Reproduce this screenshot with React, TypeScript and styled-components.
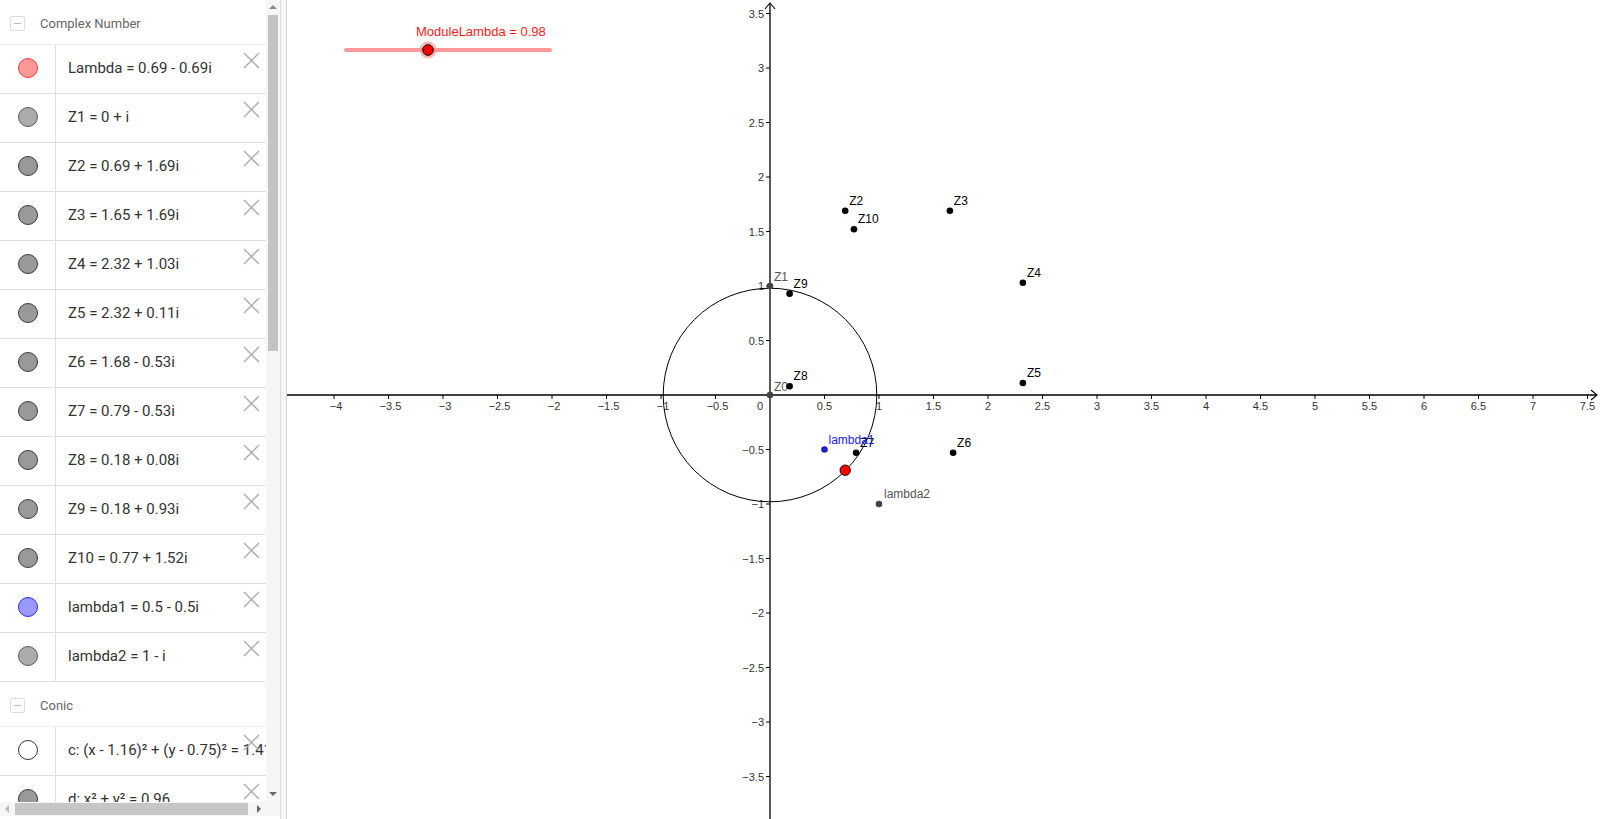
import React from "react";
import styled, { createGlobalStyle } from "styled-components";

const GlobalStyle = createGlobalStyle`
  html, body { margin: 0; padding: 0; background: #fff; overflow: hidden; }
  #root { width: 1600px; height: 819px; }
`;

const GRAPH_LEFT = 287;
const GRAPH_W = 1600 - GRAPH_LEFT;
const GRAPH_H = 819;
const OX = 770 - GRAPH_LEFT;
const OY = 395;
const U = 109;
const sx = (x: number) => OX + x * U;
const sy = (y: number) => OY - y * U;

const Page = styled.div`
  display: flex;
  width: 1600px;
  height: 819px;
  overflow: hidden;
  font-family: Roboto, "Noto Sans", sans-serif;
`;

const AlgebraPanel = styled.div`
  flex: none;
  display: grid;
  grid-template-columns: 266px 14px;
  grid-template-rows: 802px 14px 3px;
  width: 280px;
  border-right: 1px solid #dcdcdc;
  background: #fff;
`;

const Divider = styled.div`
  flex: none;
  width: 5px;
  background: #f4f4f4;
  border-right: 1px solid #d6d6d6;
`;

const ListViewport = styled.div`
  overflow: hidden;
  background: #fff;
`;

const GroupHeader = styled.div`
  height: 41px;
  padding-top: 3px;
  display: flex;
  align-items: center;
  gap: 15px;
  padding-left: 10px;
  border-bottom: 1px solid #ededed;
  color: #666;
  font-size: 13px;
  font-family: Roboto, "Noto Sans", sans-serif;
`;

const CollapseBox = styled.div`
  width: 13px;
  height: 13px;
  border: 1px solid #dddddd;
  border-radius: 2px;
  display: flex;
  align-items: center;
  justify-content: center;
  &::after {
    content: "";
    width: 7px;
    height: 1px;
    background: #b8b8b8;
  }
`;

const ItemRow = styled.div`
  position: relative;
  display: flex;
  height: 48px;
  width: 266px;
  border-bottom: 1px solid #dedede;
`;

const MarbleCell = styled.div`
  flex: none;
  width: 56px;
  display: flex;
  align-items: center;
  justify-content: center;
  border-right: 1px solid #dedede;
  padding-bottom: 2px;
  box-sizing: border-box;
`;

type MarbleKind = "red" | "light" | "gray" | "blue" | "white";
const marbleFill: Record<MarbleKind, string> = {
  red: "#ff9999",
  light: "#acacac",
  gray: "#999999",
  blue: "#9999ff",
  white: "#ffffff",
};
const marbleStroke: Record<MarbleKind, string> = {
  red: "#f03c3c",
  light: "#5a5a5a",
  gray: "#3a3a3a",
  blue: "#2a2aee",
  white: "#333333",
};

const Marble = styled.div<{ $kind: MarbleKind }>`
  width: 18px;
  height: 18px;
  border-radius: 50%;
  background: ${(p) => marbleFill[p.$kind]};
  border: 1px solid ${(p) => marbleStroke[p.$kind]};
`;

const Formula = styled.div`
  display: flex;
  align-items: center;
  padding-left: 12px;
  padding-bottom: 2px;
  white-space: nowrap;
  font-size: 15px;
  color: #333;
  font-family: Roboto, "Noto Sans", sans-serif;
`;

const CloseButton = styled.div`
  position: absolute;
  top: 7px;
  right: 6px;
  width: 17px;
  height: 17px;
  display: flex;
`;

const VScroll = styled.div`
  display: flex;
  flex-direction: column;
  align-items: center;
  background: #f6f6f6;
  padding: 5px 2px 6px;
  box-sizing: border-box;
`;

const HScroll = styled.div`
  display: flex;
  align-items: center;
  background: #f6f6f6;
  padding: 0 5px;
  box-sizing: border-box;
`;

const Corner = styled.div`
  background: #f6f6f6;
`;

const Arrow = styled.div<{ $dir: "up" | "down" | "left" | "right" }>`
  flex: none;
  width: 0;
  height: 0;
  ${(p) =>
    p.$dir === "up"
      ? "border-left: 4px solid transparent; border-right: 4px solid transparent; border-bottom: 4px solid #8a8a8a;"
      : p.$dir === "down"
      ? "border-left: 4px solid transparent; border-right: 4px solid transparent; border-top: 4px solid #666;"
      : p.$dir === "left"
      ? "border-top: 4px solid transparent; border-bottom: 4px solid transparent; border-right: 4px solid #bbb;"
      : "border-top: 4px solid transparent; border-bottom: 4px solid transparent; border-left: 4px solid #666;"}
`;

const VThumb = styled.div`
  flex: none;
  width: 10px;
  height: 336px;
  margin-top: 6px;
  background: #c3c3c3;
`;

const HThumb = styled.div`
  flex: none;
  height: 12px;
  width: 233px;
  margin-left: 6px;
  background: #c6c6c6;
  background-image: linear-gradient(to right, #b4b4b4 1px, transparent 1px);
  background-size: 4px 1px;
  background-repeat: repeat-x;
  background-position: 0 6px;
`;

const Spacer = styled.div`
  flex: 1;
`;

const GraphView = styled.div`
  flex: 1;
  height: 819px;
  background: #fff;
`;

const Canvas = styled.svg`
  display: block;
  font-family: "Liberation Sans", Arial, sans-serif;
`;

type Item = { kind: MarbleKind; text: string };

const complexItems: Item[] = [
  { kind: "red", text: "Lambda = 0.69 - 0.69i" },
  { kind: "light", text: "Z1 = 0 + i" },
  { kind: "gray", text: "Z2 = 0.69 + 1.69i" },
  { kind: "gray", text: "Z3 = 1.65 + 1.69i" },
  { kind: "gray", text: "Z4 = 2.32 + 1.03i" },
  { kind: "gray", text: "Z5 = 2.32 + 0.11i" },
  { kind: "gray", text: "Z6 = 1.68 - 0.53i" },
  { kind: "gray", text: "Z7 = 0.79 - 0.53i" },
  { kind: "gray", text: "Z8 = 0.18 + 0.08i" },
  { kind: "gray", text: "Z9 = 0.18 + 0.93i" },
  { kind: "gray", text: "Z10 = 0.77 + 1.52i" },
  { kind: "blue", text: "lambda1 = 0.5 - 0.5i" },
  { kind: "light", text: "lambda2 = 1 - i" },
];

const conicItems: Item[] = [
  { kind: "white", text: "c: (x - 1.16)² + (y - 0.75)² = 1.41" },
  { kind: "gray", text: "d: x² + y² = 0.96" },
];

const CloseIcon = () => (
  <svg width="17" height="17" viewBox="0 0 17 17">
    <path d="M1 1 L16 16 M16 1 L1 16" stroke="#ababab" strokeWidth="1.4" fill="none" />
  </svg>
);

const Row = ({ item }: { item: Item }) => (
  <ItemRow>
    <MarbleCell>
      <Marble $kind={item.kind} />
    </MarbleCell>
    <Formula>{item.text}</Formula>
    <CloseButton>
      <CloseIcon />
    </CloseButton>
  </ItemRow>
);

type Pt = { x: number; y: number; label: string; color: string; labelColor: string; dx?: number; dy?: number };

const points: Pt[] = [
  { x: 0, y: 0, label: "Z0", color: "#444", labelColor: "#555", dx: 4, dy: -4 },
  { x: 0, y: 1, label: "Z1", color: "#444", labelColor: "#555", dx: 4, dy: -5 },
  { x: 0.69, y: 1.69, label: "Z2", color: "#000", labelColor: "#000" },
  { x: 1.65, y: 1.69, label: "Z3", color: "#000", labelColor: "#000" },
  { x: 2.32, y: 1.03, label: "Z4", color: "#000", labelColor: "#000" },
  { x: 2.32, y: 0.11, label: "Z5", color: "#000", labelColor: "#000" },
  { x: 1.68, y: -0.53, label: "Z6", color: "#000", labelColor: "#000" },
  { x: 0.79, y: -0.53, label: "Z7", color: "#000", labelColor: "#000" },
  { x: 0.18, y: 0.08, label: "Z8", color: "#000", labelColor: "#000" },
  { x: 0.18, y: 0.93, label: "Z9", color: "#000", labelColor: "#000" },
  { x: 0.77, y: 1.52, label: "Z10", color: "#000", labelColor: "#000" },
  { x: 1, y: -1, label: "lambda2", color: "#444", labelColor: "#555", dx: 5, dy: -6 },
  { x: 0.5, y: -0.5, label: "lambda1", color: "#2222cc", labelColor: "#1a1aee" },
];

const fmt = (v: number) => {
  const s = Math.abs(v).toString();
  return v < 0 ? "\u2212" + s : s;
};

const Graph = () => {
  const xTicks: number[] = [];
  for (let k = -9; k <= 16; k++) {
    const v = k * 0.5;
    const px = sx(v);
    if (k !== 0 && px > 20 && px < GRAPH_W - 8) xTicks.push(v);
  }
  const yTicks: number[] = [];
  for (let k = -7; k <= 7; k++) if (k !== 0) yTicks.push(k * 0.5);

  const sliderX0 = 346 - GRAPH_LEFT;
  const sliderX1 = 550 - GRAPH_LEFT;
  const knobX = 428 - GRAPH_LEFT;

  return (
    <Canvas width={GRAPH_W} height={GRAPH_H} viewBox={`0 0 ${GRAPH_W} ${GRAPH_H}`}>
      <line x1={0} y1={OY} x2={GRAPH_W - 3} y2={OY} stroke="#000" strokeWidth={1.3} />
      <polyline
        points={`${GRAPH_W - 9},${OY - 5} ${GRAPH_W - 3},${OY} ${GRAPH_W - 9},${OY + 5}`}
        fill="none"
        stroke="#000"
        strokeWidth={1.1}
      />
      <line x1={OX} y1={3} x2={OX} y2={GRAPH_H} stroke="#000" strokeWidth={1.3} />
      <polyline points={`${OX - 5},${9} ${OX},${3} ${OX + 5},${9}`} fill="none" stroke="#000" strokeWidth={1.1} />

      {xTicks.map((v) => (
        <g key={"x" + v}>
          <line x1={sx(v)} y1={OY} x2={sx(v)} y2={OY + 4} stroke="#000" strokeWidth={1} />
          <text x={sx(v) + (v < 0 ? 2 : 0)} y={OY + 15} fontSize={11} fill="#333" textAnchor="middle">
            {fmt(v)}
          </text>
        </g>
      ))}
      {yTicks.map((v) => (
        <g key={"y" + v}>
          <line x1={OX - 4} y1={sy(v)} x2={OX} y2={sy(v)} stroke="#000" strokeWidth={1} />
          <text x={OX - 6} y={sy(v) + 4} fontSize={11} fill="#333" textAnchor="end">
            {fmt(v)}
          </text>
        </g>
      ))}
      <text x={OX - 10} y={OY + 15} fontSize={11} fill="#333" textAnchor="middle">
        0
      </text>

      <circle cx={sx(0)} cy={sy(0)} r={Math.sqrt(0.96) * U} fill="none" stroke="#000" strokeWidth={1} />

      {points.map((p) => (
        <g key={p.label}>
          <circle cx={sx(p.x)} cy={sy(p.y)} r={3.3} fill={p.color} />
          <text x={sx(p.x) + (p.dx ?? 4)} y={sy(p.y) + (p.dy ?? -6)} fontSize={12} fill={p.labelColor}>
            {p.label}
          </text>
        </g>
      ))}

      <circle cx={sx(0.69)} cy={sy(-0.69)} r={5.2} fill="#ff0000" stroke="#000" strokeWidth={0.9} />

      <text x={416 - GRAPH_LEFT} y={36} fontSize={13} fill="#ff1a1a">
        ModuleLambda = 0.98
      </text>
      <line x1={sliderX0} y1={50} x2={sliderX1} y2={50} stroke="#ff9999" strokeWidth={4} strokeLinecap="round" />
      <circle cx={knobX} cy={50} r={8.5} fill="#ff9999" opacity={0.75} />
      <circle cx={knobX} cy={50} r={5.3} fill="#ff0000" stroke="#000" strokeWidth={1} />
    </Canvas>
  );
};

export default function App() {
  return (
    <>
      <GlobalStyle />
      <Page>
        <AlgebraPanel>
          <ListViewport>
            <GroupHeader>
              <CollapseBox />
              Complex Number
            </GroupHeader>
            {complexItems.map((it) => (
              <Row key={it.text} item={it} />
            ))}
            <GroupHeader>
              <CollapseBox />
              Conic
            </GroupHeader>
            {conicItems.map((it) => (
              <Row key={it.text} item={it} />
            ))}
          </ListViewport>
          <VScroll>
            <Arrow $dir="up" />
            <VThumb />
            <Spacer />
            <Arrow $dir="down" />
          </VScroll>
          <HScroll>
            <Arrow $dir="left" />
            <HThumb />
            <Spacer />
            <Arrow $dir="right" />
          </HScroll>
          <Corner />
        </AlgebraPanel>
        <Divider />
        <GraphView>
          <Graph />
        </GraphView>
      </Page>
    </>
  );
}
